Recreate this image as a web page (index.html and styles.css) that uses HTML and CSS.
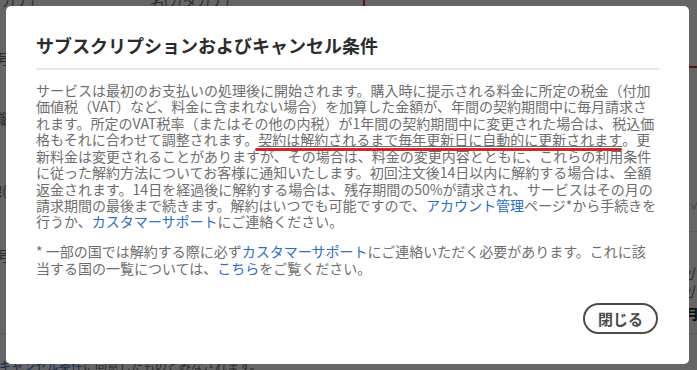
FILE: index.html
```html
<!DOCTYPE html>
<html lang="ja">
<head>
    <meta charset="UTF-8">
    <meta name="viewport" content="width=device-width, initial-scale=1.0">
    <title>サブスクリプションおよびキャンセル条件</title>
    <link rel="stylesheet" href="styles.css">
</head>
<body>
    <!-- 背景のフォーム (モーダルで隠れている) -->
    <div class="page">
        <div class="bg-top">
            <div class="bg-label name-sei">姓(カタカナ)</div>
            <div class="bg-label name-mei">名(カタカナ)</div>
            <div class="bg-field error"></div>
        </div>
        <div class="bg-labels">
            <div class="bg-label l1">電話番号</div>
            <div class="bg-label l2">役職</div>
            <div class="bg-label l3">内線(</div>
            <div class="bg-label l4">郵便番号</div>
        </div>
        <div class="bg-right">
            <div class="bg-check">✓</div>
            <div class="bg-rule"></div>
            <div class="bg-small">小</div>
            <div class="bg-small">小</div>
            <div class="bg-bold">月</div>
        </div>
        <div class="bg-foot">
            <div class="bg-rule"></div>
            <div class="bg-note">
                <span class="bg-radio"></span><a href="#">キャンセル条件</a>に同意したものとみなされます。
            </div>
        </div>
    </div>

    <div class="overlay">
        <div class="modal" role="dialog" aria-labelledby="modalTitle">
            <h2 id="modalTitle" class="modal-title">サブスクリプションおよびキャンセル条件</h2>
            <div class="modal-body">
                <p>サービスは最初のお支払いの処理後に開始されます。購入時に提示される料金に所定の税金（付加価値税（VAT）など、料金に含まれない場合）を加算した金額が、年間の契約期間中に毎月請求されます。所定のVAT税率（またはその他の内税）が1年間の契約期間中に変更された場合は、税込価格もそれに合わせて調整されます。<span class="marked">契約は解約されるまで毎年更新日に自動的に更新されます</span>。更新料金は変更されることがありますが、その場合は、料金の変更内容とともに、これらの利用条件に従った解約方法についてお客様に通知いたします。初回注文後14日以内に解約する場合は、全額返金されます。14日を経過後に解約する場合は、残存期間の50%が請求され、サービスはその月の請求期間の最後まで続きます。解約はいつでも可能ですので、<a href="#">アカウント管理</a>ページ*から手続きを行うか、<a href="#">カスタマーサポート</a>にご連絡ください。</p>
                <p>* 一部の国では解約する際に必ず<a href="#">カスタマーサポート</a>にご連絡いただく必要があります。これに該当する国の一覧については、<a href="#">こちら</a>をご覧ください。</p>
            </div>
            <div class="modal-foot">
                <button type="button" class="btn-close">閉じる</button>
            </div>
        </div>
    </div>
</body>
</html>
```

FILE: styles.css
```css
html, body {
    margin: 0;
    height: 100%;
    overflow: hidden;
}
body {
    font-family: "Noto Sans CJK JP", sans-serif;
    background-color: #fff;
    color: #6e6e6e;
}

/* 背景のページ */
.page {
    display: grid;
    grid-template-columns: 52px 1fr 60px;
    grid-template-rows: 24px 321px auto;
    width: 794px;
    margin: -12px 0 0 -45px;
    font-size: 14px;
}
.bg-top {
    grid-column: 1 / -1;
    display: flex;
    height: 24px;
    line-height: 24px;
}
.name-sei { width: 195px; flex: none; }
.name-mei { width: 213px; flex: none; }
.bg-field {
    flex: 1;
    height: 76px;
    border: 2px solid #d7373f;
}
.bg-labels {
    text-align: right;
    white-space: nowrap;
    direction: rtl;
    line-height: 20px;
}
.bg-labels .bg-label { direction: ltr; unicode-bidi: isolate; }
.l1 { margin-top: 36px; }
.l2 { margin-top: 40px; }
.l3 { margin-top: 52px; }
.l4 { margin-top: 45px; }
.bg-right {
    grid-column: 3;
    line-height: 18px;
}
.bg-check { margin-top: 182px; color: #aaa; padding-left: 2px; }
.bg-right .bg-rule { margin-top: 19px; }
.bg-small { font-style: italic; margin-left: -4px; }
.bg-right .bg-small:nth-of-type(3) { margin-top: 32px; }
.bg-bold { font-weight: bold; color: #222; margin-top: 4px; margin-left: -4px; }
.bg-rule {
    border-top: 1px solid #e1e1e1;
}
.bg-foot {
    grid-column: 1 / -1;
}
.bg-note {
    margin: 23px 0 0 25px;
    font-size: 12px;
    line-height: 18px;
}
.bg-note a { color: #2c6ecb; text-decoration: none; }
.bg-radio {
    display: inline-block;
    width: 12px;
    height: 12px;
    border: 2px solid #2c6ecb;
    border-radius: 50%;
    margin-right: 3px;
    vertical-align: -3px;
}

/* モーダル */
.overlay {
    position: fixed;
    inset: 0;
    padding-right: 2px;
    background-color: rgba(0, 0, 0, 0.6);
    display: flex;
    justify-content: center;
    align-items: center;
}
.modal {
    width: 683px;
    box-sizing: border-box;
    padding: 28px 30px 30px;
    background-color: #fff;
    border-radius: 5px;
}
.modal-title {
    margin: 0;
    padding-bottom: 12px;
    border-bottom: 2px solid #e8e8e8;
    font-size: 18px;
    line-height: 22px;
    font-weight: 700;
    color: #2c2c2c;
}
.modal-body {
    margin-top: 12px;
}
.modal-body p {
    margin: 0;
    font-size: 14px;
    line-height: 16.4px;
    color: #6e6e6e;
}
.modal-body p + p {
    margin-top: 13.4px;
}
.modal-body a {
    color: #2c6ecb;
    text-decoration: none;
}
.marked {
    position: relative;
    text-decoration: underline;
}
/* 赤いマーカー線 */
.marked::after {
    content: "";
    position: absolute;
    left: -3px;
    right: 0;
    bottom: -2px;
    height: 3.5px;
    border-radius: 2px;
    background-color: #d8232a;
}
.modal-foot {
    margin-top: 27px;
    display: flex;
    justify-content: flex-end;
}
.btn-close {
    height: 31px;
    padding: 0 13px;
    margin-right: 1px;
    border: 2px solid #4b4b4b;
    border-radius: 16px;
    background-color: #fff;
    font-family: inherit;
    font-size: 15px;
    font-weight: 700;
    line-height: 1;
    color: #4b4b4b;
    cursor: pointer;
}
```
